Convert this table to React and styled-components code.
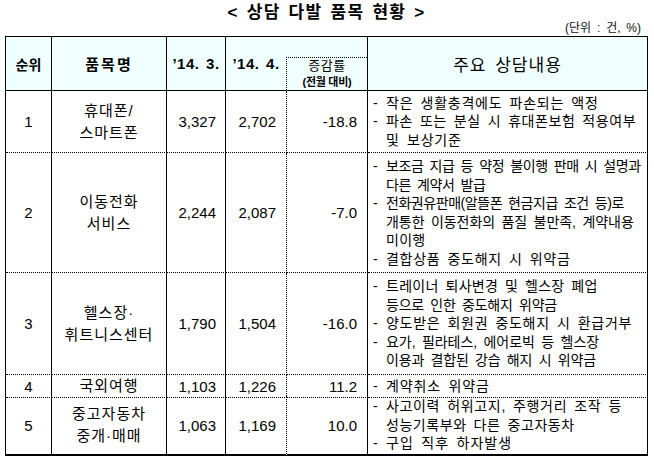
import React from 'react';
import styled, { createGlobalStyle } from 'styled-components';

const Global = createGlobalStyle`
  html, body { margin: 0; padding: 0; background: #fff; }
  body {
    font-family: "Liberation Sans", "Noto Sans CJK KR", sans-serif;
    color: #000;
  }
`;

const COLS = '46px 115px 59px 61px 81px 280px';

const Page = styled.div`
  width: 643px;
  padding-left: 5px;
`;

const Title = styled.h1`
  margin: 0;
  height: 22px;
  line-height: 25px;
  text-align: center;
  font-size: 17px;
  font-weight: 700;
  letter-spacing: 1.3px;
  word-spacing: 2px;
`;

const Unit = styled.div`
  height: 14px;
  line-height: 12px;
  font-size: 12px;
  text-align: right;
  padding-right: 7px;
  word-spacing: 2.5px;
  color: #111;
`;

const Table = styled.div`
  width: 642px;
  border-top: 1px solid #000;
  border-left: 1px solid #000;
`;

const Row = styled.div`
  display: grid;
  grid-template-columns: ${COLS};
  height: ${(p) => p.$h}px;
`;

const Cell = styled.div`
  box-sizing: border-box;
  min-width: 0;
  border-right: 1px ${(p) => (p.$dotRight ? 'dotted' : 'solid')} #000;
  border-bottom: ${(p) => (p.$last ? '2px solid #000' : '1px dotted #000')};
  display: flex;
  align-items: center;
  justify-content: center;
  font-size: 15px;
`;

const HeadCell = styled(Cell)`
  background: #f0ffff;
  border-bottom: 1px solid #000;
  border-right: ${(p) => (p.$noRight ? '1px solid transparent' : '1px solid #000')};
  font-weight: ${(p) => (p.$light ? 400 : 700)};
  font-size: ${(p) => p.$size || 15}px;
  letter-spacing: ${(p) => p.$ls || 0}px;
  word-spacing: ${(p) => p.$ws || 0}px;
  white-space: nowrap;
`;

const SubHeadCell = styled(HeadCell)`
  align-items: flex-end;
  justify-content: flex-start;
`;

const SubBox = styled.div`
  box-sizing: border-box;
  width: calc(100% + 1px);
  margin-left: -1px;
  height: 33px;
  border-top: 1px dotted #000;
  border-left: 1px dotted #000;
  display: flex;
  flex-direction: column;
  align-items: center;
`;

const SubMain = styled.span`
  font-size: 13px;
  font-weight: 400;
  line-height: 16px;
  letter-spacing: 0.5px;
`;

const SubNote = styled.span`
  font-size: 11px;
  font-weight: 700;
  line-height: 16px;
  letter-spacing: -0.3px;
`;

const RankCell = styled(Cell)`
  font-size: 15px;
`;

const NameCell = styled(Cell)`
  font-size: 15px;
  letter-spacing: 1px;
  line-height: 22px;
  text-align: center;
  white-space: nowrap;
`;

const NumCell = styled(Cell)`
  justify-content: flex-end;
  padding-right: ${(p) => p.$pr || 9}px;
  font-size: 15px;
`;

const DescCell = styled(Cell)`
  flex-direction: column;
  align-items: stretch;
  justify-content: center;
  padding-left: 5px;
  font-size: 14px;
  word-spacing: 2.6px;
  line-height: 18.5px;
  white-space: nowrap;
`;

const Bullet = styled.div`
  display: flex;
`;

const Dash = styled.span`
  flex: none;
  width: 13px;
`;

const Lines = styled.div`
  display: flex;
  flex-direction: column;
`;

const Line = styled.span`
  letter-spacing: ${(p) => p.$ls}px;
`;

const rows = [
  {
    h: 62,
    rank: '1',
    name: ['휴대폰/', '스마트폰'],
    m3: '3,327',
    m4: '2,702',
    rate: '-18.8',
    desc: [
      [['작은 생활충격에도 파손되는 액정', 0.75]],
      [['파손 또는 분실 시 휴대폰보험 적용여부', 0.55], ['및 보상기준', 0.8]],
    ],
  },
  {
    h: 120,
    rank: '2',
    name: ['이동전화', '서비스'],
    m3: '2,244',
    m4: '2,087',
    rate: '-7.0',
    desc: [
      [['보조금 지급 등 약정 불이행 판매 시 설명과', -0.4], ['다른 계약서 발급', -0.4]],
      [
        ['전화권유판매(알뜰폰 현금지급 조건 등)로', -0.45],
        ['개통한 이동전화의 품질 불만족, 계약내용', -0.05],
        ['미이행', 0.3],
      ],
      [['결합상품 중도해지 시 위약금', 0.7]],
    ],
  },
  {
    h: 102,
    rank: '3',
    name: ['헬스장·', '휘트니스센터'],
    m3: '1,790',
    m4: '1,504',
    rate: '-16.0',
    desc: [
      [['트레이너 퇴사변경 및 헬스장 폐업', 0.3], ['등으로 인한 중도해지 위약금', -0.2]],
      [['양도받은 회원권 중도해지 시 환급거부', 0.7]],
      [['요가, 필라테스, 에어로빅 등 헬스장', -0.05], ['이용과 결합된 강습 해지 시 위약금', -0.15]],
    ],
  },
  {
    h: 21,
    rank: '4',
    name: ['국외여행'],
    m3: '1,103',
    m4: '1,226',
    rate: '11.2',
    desc: [[['계약취소 위약금', 0.9]]],
  },
  {
    h: 60,
    rank: '5',
    name: ['중고자동차', '중개·매매'],
    m3: '1,063',
    m4: '1,169',
    rate: '10.0',
    desc: [
      [['사고이력 허위고지, 주행거리 조작 등', 0.65], ['성능기록부와 다른 중고자동차', 0.55]],
      [['구입 직후 하자발생', 1.0]],
    ],
  },
];

export default function App() {
  return (
    <>
      <Global />
      <Page>
        <Title>&lt; 상담 다발 품목 현황 &gt;</Title>
        <Unit>(단위 : 건, %)</Unit>
        <Table>
          <Row $h={54}>
            <HeadCell $size={14}>순위</HeadCell>
            <HeadCell $ls={2}>품목명</HeadCell>
            <HeadCell $ls={0.5} $ws={2}>’14. 3.</HeadCell>
            <HeadCell $ls={0.5} $ws={2} $noRight>’14. 4.</HeadCell>
            <SubHeadCell>
              <SubBox>
                <SubMain>증감률</SubMain>
                <SubNote>(전월 대비)</SubNote>
              </SubBox>
            </SubHeadCell>
            <HeadCell $light $size={17} $ls={1} $ws={3}>주요 상담내용</HeadCell>
          </Row>
          {rows.map((r, i) => {
            const last = i === rows.length - 1;
            return (
              <Row key={r.rank} $h={r.h}>
                <RankCell $last={last}>{r.rank}</RankCell>
                <NameCell $last={last}>
                  <div>
                    {r.name.map((n, k) => (
                      <div key={k}>{n}</div>
                    ))}
                  </div>
                </NameCell>
                <NumCell $last={last} $pr={9}>{r.m3}</NumCell>
                <NumCell $last={last} $pr={10} $dotRight>{r.m4}</NumCell>
                <NumCell $last={last} $pr={10}>{r.rate}</NumCell>
                <DescCell $last={last}>
                  {r.desc.map((b, k) => (
                    <Bullet key={k}>
                      <Dash>-</Dash>
                      <Lines>
                        {b.map(([t, ls], j) => (
                          <Line key={j} $ls={ls}>{t}</Line>
                        ))}
                      </Lines>
                    </Bullet>
                  ))}
                </DescCell>
              </Row>
            );
          })}
        </Table>
      </Page>
    </>
  );
}
